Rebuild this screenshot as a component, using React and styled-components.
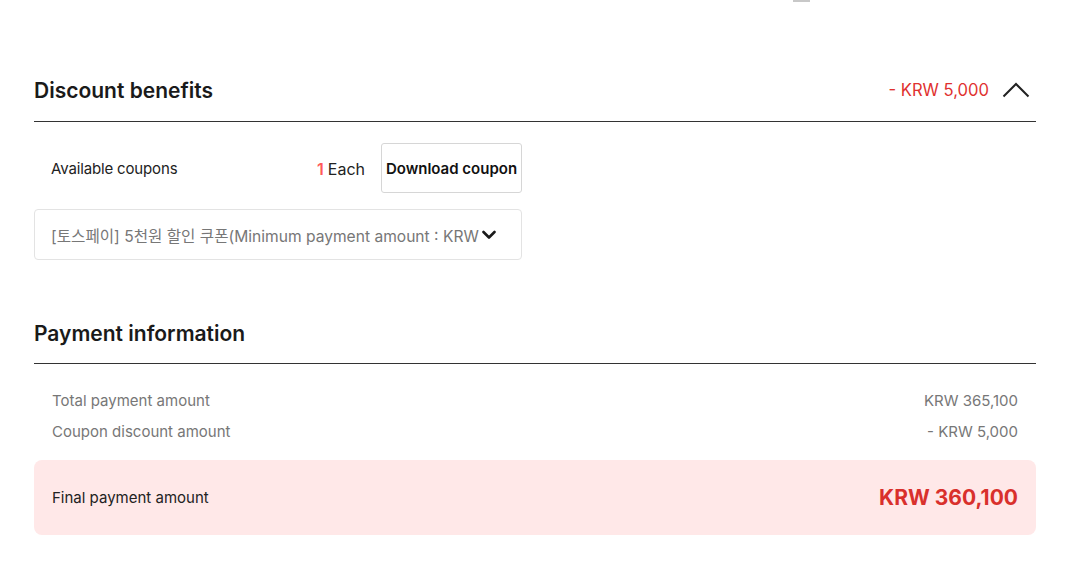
import React from "react";
import styled, { createGlobalStyle } from "styled-components";

const Global = createGlobalStyle`
  html, body { margin: 0; padding: 0; background: #fff; }
  body { font-family: Inter, "Noto Sans CJK KR", "Noto Sans", sans-serif; color: #222; }
  * { box-sizing: border-box; }
`;

const Page = styled.div`
  width: 1080px;
  height: 577px;
  overflow: hidden;
  padding: 0 44px 0 34px;
`;

const TopStrip = styled.div`
  height: 59px;
  display: flex;
  padding-left: 759px;
`;

const Mark = styled.div`
  width: 17px;
  height: 2px;
  background: #c8c8c8;
`;

const SectionHead = styled.div`
  height: ${(p) => p.$h}px;
  display: flex;
  align-items: center;
  justify-content: space-between;
  border-bottom: 1px solid #333;
`;

const Title = styled.h2`
  margin: 0;
  font-size: 21px;
  font-weight: 600;
  color: #1a1a1a;
`;

const HeadRight = styled.div`
  display: flex;
  align-items: center;
  gap: 13px;
  padding-right: 6px;
`;

const DiscountText = styled.span`
  font-size: 16.6px;
  color: #e0312f;
`;

const CouponArea = styled.div`
  width: 488px;
  padding-top: 21px;
  display: flex;
  flex-direction: column;
  gap: 16px;
`;

const CouponRow = styled.div`
  display: flex;
  align-items: center;
  height: 50px;
  padding-left: 17px;
`;

const Label = styled.span`
  font-size: 15px;
  letter-spacing: -0.15px;
  color: #222;
  flex: 1;
`;

const Count = styled.span`
  font-size: 16px;
  color: #222;
  margin-right: 16px;
  margin-top: 2px;
  b { color: #ff5a5a; font-weight: 600; margin-right: 4px; }
`;

const DownloadButton = styled.button`
  height: 50px;
  width: 141px;
  border: 1px solid #d6d6d6;
  border-radius: 3px;
  background: #fff;
  font-family: inherit;
  font-size: 15px;
  font-weight: 600;
  color: #111;
  padding: 0;
  white-space: nowrap;
`;

const Select = styled.div`
  height: 51px;
  border: 1px solid #e3e3e3;
  border-radius: 4px;
  display: flex;
  align-items: center;
  padding: 0 22px 0 16px;
  gap: 3px;
`;

const SelectText = styled.span`
  white-space: nowrap;
  font-size: 15.6px;
  color: #777;
`;

const Spacer = styled.div`
  height: ${(p) => p.$h}px;
`;

const Rows = styled.div`
  padding: 21px 18px 0 18px;
`;

const Row = styled.div`
  height: 31px;
  display: flex;
  align-items: center;
  justify-content: space-between;
  font-size: 15px;
  color: #777;
`;

const FinalBox = styled.div`
  margin-top: 13px;
  height: 75px;
  background: #ffe8e8;
  border-radius: 8px;
  display: flex;
  align-items: center;
  justify-content: space-between;
  padding: 0 18px;
`;

const FinalLabel = styled.span`
  font-size: 15px;
  color: #222;
`;

const FinalValue = styled.span`
  font-size: 21px;
  font-weight: 700;
  color: #d9302c;
`;

const ChevronUp = () => (
  <svg width="28" height="16" viewBox="0 0 28 16" fill="none">
    <path d="M1.5 14.5 L14 2 L26.5 14.5" stroke="#222" strokeWidth="2" />
  </svg>
);

const ChevronDown = () => (
  <svg width="14" height="10" viewBox="0 0 14 10" fill="none">
    <path d="M1.5 2 L7 7.5 L12.5 2" stroke="#1a1a1a" strokeWidth="2.6" strokeLinecap="round" strokeLinejoin="round" />
  </svg>
);

export default function App() {
  return (
    <>
      <Global />
      <Page>
        <TopStrip>
          <Mark />
        </TopStrip>
        <SectionHead $h={63}>
          <Title>Discount benefits</Title>
          <HeadRight>
            <DiscountText>- KRW 5,000</DiscountText>
            <ChevronUp />
          </HeadRight>
        </SectionHead>
        <CouponArea>
          <CouponRow>
            <Label>Available coupons</Label>
            <Count>
              <b>1</b>Each
            </Count>
            <DownloadButton>Download coupon</DownloadButton>
          </CouponRow>
          <Select>
            <SelectText>[토스페이] 5천원 할인 쿠폰(Minimum payment amount : KRW</SelectText>
            <ChevronDown />
          </Select>
        </CouponArea>
        <Spacer $h={43} />
        <SectionHead $h={61}>
          <Title>Payment information</Title>
        </SectionHead>
        <Rows>
          <Row>
            <span>Total payment amount</span>
            <span>KRW 365,100</span>
          </Row>
          <Row>
            <span>Coupon discount amount</span>
            <span>- KRW 5,000</span>
          </Row>
        </Rows>
        <FinalBox>
          <FinalLabel>Final payment amount</FinalLabel>
          <FinalValue>KRW 360,100</FinalValue>
        </FinalBox>
      </Page>
    </>
  );
}
